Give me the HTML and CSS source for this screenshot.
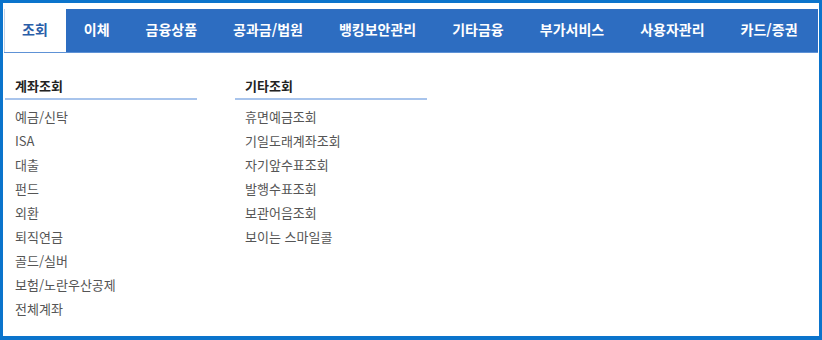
FILE: index.html
```html
<!DOCTYPE html>
<html lang="ko">
<head>
  <meta charset="UTF-8">
  <title>조회 메뉴</title>
  <link rel="stylesheet" href="styles.css">
</head>
<body>
  <div class="frame">
    <ul class="gnb">
      <li class="active"><a href="#">조회</a></li>
      <li><a href="#">이체</a></li>
      <li><a href="#">금융상품</a></li>
      <li><a href="#">공과금/법원</a></li>
      <li><a href="#">뱅킹보안관리</a></li>
      <li><a href="#">기타금융</a></li>
      <li><a href="#">부가서비스</a></li>
      <li><a href="#">사용자관리</a></li>
      <li><a href="#">카드/증권</a></li>
    </ul>

    <div class="submenu">
      <div class="col">
        <h3>계좌조회</h3>
        <ul>
          <li><a href="#">예금/신탁</a></li>
          <li><a href="#">ISA</a></li>
          <li><a href="#">대출</a></li>
          <li><a href="#">펀드</a></li>
          <li><a href="#">외환</a></li>
          <li><a href="#">퇴직연금</a></li>
          <li><a href="#">골드/실버</a></li>
          <li><a href="#">보험/노란우산공제</a></li>
          <li><a href="#">전체계좌</a></li>
        </ul>
      </div>
      <div class="col">
        <h3>기타조회</h3>
        <ul>
          <li><a href="#">휴면예금조회</a></li>
          <li><a href="#">기일도래계좌조회</a></li>
          <li><a href="#">자기앞수표조회</a></li>
          <li><a href="#">발행수표조회</a></li>
          <li><a href="#">보관어음조회</a></li>
          <li><a href="#">보이는 스마일콜</a></li>
        </ul>
      </div>
    </div>
  </div>
</body>
</html>
```

FILE: styles.css
```css
* {
  box-sizing: border-box;
}
body {
  font-family: "Noto Sans CJK KR", "Noto Sans", sans-serif;
  background-color: #fff;
  margin: 0;
  padding: 0;
}
ul {
  list-style: none;
  margin: 0;
  padding: 0;
}
a {
  text-decoration: none;
  color: inherit;
}
.frame {
  width: 822px;
  height: 340px;
  border: 3px solid #0b74cc;
  border-right-width: 3px;
  border-bottom-width: 4px;
  padding: 6px 1px 0 1px;
}
.gnb {
  display: flex;
  height: 44px;
  background-color: #2d6dc1;
  border-bottom: 1px solid #5e92d6;
}
.gnb li a {
  display: block;
  height: 43px;
  line-height: 41px;
  padding: 0 18px;
  font-size: 14px;
  font-weight: bold;
  color: #fff;
}
.gnb li.active a {
  background-color: #fff;
  color: #2a5ea8;
  border-left: 1px solid #c3d2e8;
  padding-left: 17px;
}
.submenu {
  display: flex;
  gap: 38px;
  padding: 23px 0 0 1px;
}
.col {
  width: 192px;
}
.col h3 {
  margin: 0;
  padding: 0 10px 2px;
  font-size: 13px;
  line-height: 20px;
  font-weight: bold;
  color: #222;
  border-bottom: 2px solid #a8c4ec;
}
.col ul {
  margin-top: 5px;
}
.col li a {
  display: block;
  padding-left: 10px;
  font-size: 13px;
  line-height: 24px;
  color: #555;
}
```
